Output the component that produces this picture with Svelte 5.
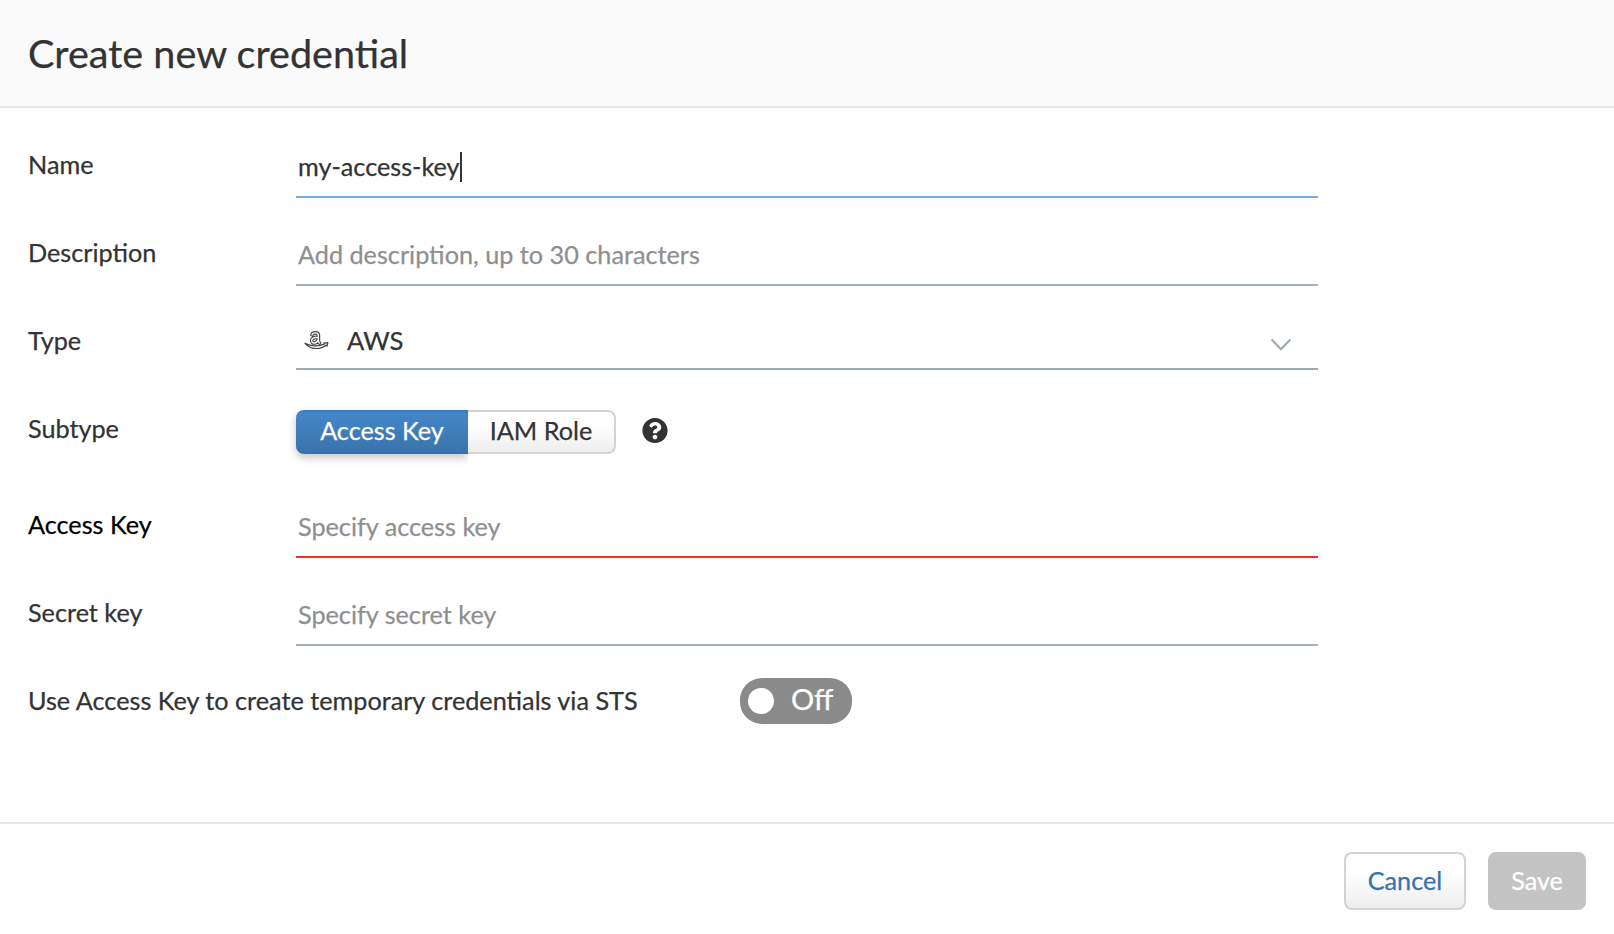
<script>
  const name = 'my-access-key';
</script>

<div class="dialog">
  <header><h1>Create new credential</h1></header>

  <main>
    <div class="row">
      <span class="label">Name</span>
      <div class="field focused"><span class="name">{name}</span><i class="caret"></i></div>
    </div>
    <div class="row">
      <span class="label">Description</span>
      <div class="field hint">Add description, up to 30 characters</div>
    </div>
    <div class="row">
      <span class="label">Type</span>
      <div class="field select">
        <svg class="aws" width="25" height="20" viewBox="0 0 25 20" fill="none">
          <g stroke-linecap="round" stroke-linejoin="round">
            <path d="M8 4.8C8.5 2.4 14.4 1.9 14.4 5.4v5.4q0 1.4 1.1 2.2M14.2 7.2C10 7.2 7.6 8.4 7.6 10.6c0 3.4 5.2 3.2 6.4-.6" stroke="#444" stroke-width="3.6" />
            <path d="M8 4.8C8.5 2.4 14.4 1.9 14.4 5.4v5.4q0 1.4 1.1 2.2M14.2 7.2C10 7.2 7.6 8.4 7.6 10.6c0 3.4 5.2 3.2 6.4-.6" stroke="#fff" stroke-width="1.4" />
          </g>
          <path d="M1 13.3C7 16.7 15 16.7 20.6 13.9l-.7-.9 4-.4-.9 3.5-1-.9C16.5 19.8 6.5 19.9 1 13.3Z" fill="#fff" stroke="#444" stroke-width="1.2" stroke-linejoin="round" />
        </svg>
        <span class="value">AWS</span>
        <svg class="chevron" width="22" height="14" viewBox="0 0 22 14" fill="none" stroke="#a0a9b1" stroke-width="2.2">
          <path d="M1.6 1.6 11 11.2 20.4 1.6" />
        </svg>
      </div>
    </div>
    <div class="row subtype">
      <span class="label">Subtype</span>
      <div class="segments">
        <button class="active">Access Key</button><button>IAM Role</button>
      </div>
      <svg class="help" width="26" height="27" viewBox="0 -10 512 532" fill="#333">
        <path d="M504 256c0 136.997-111.043 248-248 248S8 392.997 8 256C8 119.083 119.043 8 256 8s248 111.083 248 248zM262.655 90c-54.497 0-89.255 22.957-116.549 63.758-3.536 5.286-2.353 12.415 2.715 16.258l34.699 26.31c5.205 3.947 12.621 3.008 16.665-2.122 17.864-22.658 30.113-35.797 57.303-35.797 20.429 0 45.698 13.148 45.698 32.958 0 14.976-12.363 22.667-32.534 33.976C247.128 238.528 216 254.941 216 296v4c0 6.627 5.373 12 12 12h56c6.627 0 12-5.373 12-12v-1.333c0-28.462 83.186-29.647 83.186-106.667 0-58.002-60.165-102-116.531-102zM256 338c-25.365 0-46 20.635-46 46 0 25.364 20.635 46 46 46s46-20.636 46-46c0-25.365-20.635-46-46-46z" />
      </svg>
    </div>
    <div class="row">
      <span class="label dark">Access Key</span>
      <div class="field hint error">Specify access key</div>
    </div>
    <div class="row">
      <span class="label">Secret key</span>
      <div class="field hint">Specify secret key</div>
    </div>
    <div class="row">
      <span class="label wide">Use Access Key to create temporary credentials via STS</span>
      <div class="toggle"><i class="knob"></i><span>Off</span></div>
    </div>
  </main>

  <footer>
    <button class="cancel">Cancel</button>
    <button class="save">Save</button>
  </footer>
</div>

<style>
  :global(body) { margin: 0; background: #fff; }
  .dialog {
    display: flex;
    flex-direction: column;
    height: 934px;
    font-family: Lato, sans-serif;
    font-size: 25.23px;
    -webkit-text-stroke: 0.25px currentColor;
    color: #333;
    white-space: nowrap;
  }
  header {
    box-sizing: border-box;
    height: 108px;
    padding-left: 28px;
    background: #fafafa;
    border-bottom: 2px solid #e5e5e5;
  }
  h1 {
    margin: 0;
    font-size: 39.6px;
    font-weight: 400;
    line-height: 105px;
  }
  main { flex: 1; padding: 22px 28px 0; }
  .row { display: flex; align-items: flex-start; height: 88px; }
  .label { width: 268px; line-height: 69px; }
  .label.dark { color: #000; }
  .label.wide { width: 712px; }
  .field {
    box-sizing: border-box;
    display: flex;
    width: 1022px;
    height: 68px;
    padding: 6px 2px 0;
    line-height: 61px;
    border-bottom: 2px solid #a5afb8;
  }
  .focused { border-color: #77abe0; }
  .error { border-color: #ed3024; }
  .hint { color: #8f8f8f; }
  .name { width: 162px; }
  .caret { width: 2px; height: 30px; margin-top: 16px; background: #333; }
  .select {
    height: 64px;
    padding: 6px 26px 0 8px;
    line-height: 57px;
    border-color: #9caab6;
  }
  .aws { margin-top: 18px; }
  .value { margin-left: 18px; font-size: 25.6px; }
  .chevron { margin: 26px 0 0 auto; }
  .subtype { height: 96px; }
  button {
    box-sizing: border-box;
    margin: 0;
    padding: 0;
    font: inherit;
    color: #333;
    text-align: center;
    background: linear-gradient(#fff 30%, #eee);
    border: 2px solid #d3d3d3;
    border-radius: 8px;
  }
  .segments { display: flex; margin-top: 16px; }
  .segments button {
    width: 148px;
    height: 44px;
    padding: 0 0 3px;
    line-height: 37px;
    border-left: 0;
    border-radius: 0 8px 8px 0;
  }
  .segments .active {
    width: 172px;
    color: #fff;
    background: linear-gradient(#4387c8, #3a74ac);
    border: 0;
    border-top: 2px solid #3d7fbe;
    border-bottom: 2px solid #3670a8;
    border-radius: 8px 0 0 8px;
    box-shadow: 0 4px 8px rgba(0, 0, 0, 0.22);
    clip-path: inset(-10px 0 -16px -12px);
  }
  .help { margin: 23px 0 0 26px; }
  .toggle {
    display: flex;
    box-sizing: border-box;
    width: 112px;
    height: 46px;
    margin-top: 12px;
    padding-left: 8px;
    border-radius: 22px;
    background: #8a8a8a;
    color: #fff;
    font-size: 29px;
    line-height: 42px;
  }
  .knob { width: 26px; height: 26px; margin: 10px 17px 0 0; border-radius: 50%; background: #fff; }
  footer {
    box-sizing: border-box;
    display: flex;
    justify-content: flex-end;
    gap: 22px;
    height: 112px;
    padding: 28px 28px 0;
    border-top: 2px solid #e5e5e5;
  }
  footer button { height: 58px; padding-bottom: 1px; line-height: 53px; }
  .cancel { width: 122px; color: #3573ab; }
  .save { width: 98px; color: #fff; background: #c4c4c4; border-color: #c4c4c4; }
</style>
